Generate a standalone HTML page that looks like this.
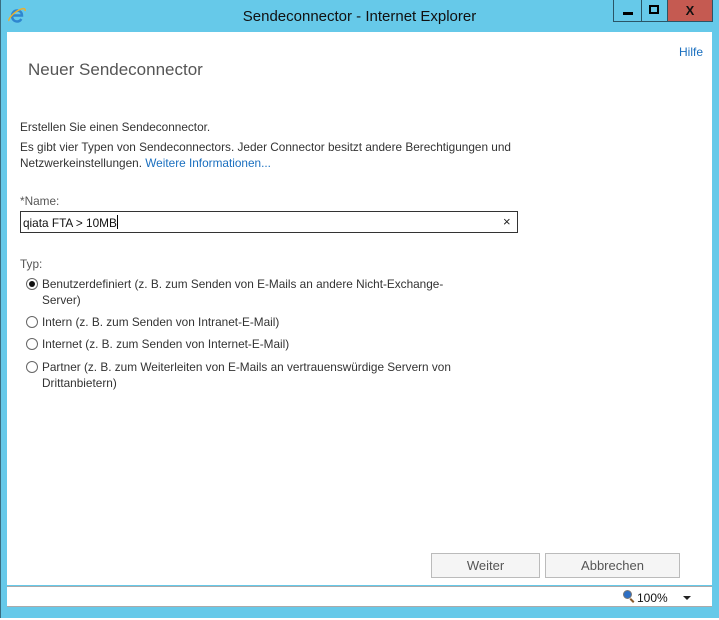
<!DOCTYPE html>
<html><head><meta charset="utf-8"><style>
*{margin:0;padding:0;box-sizing:border-box}
body{width:719px;height:620px;position:relative;background:#fff;font-family:"Liberation Sans",sans-serif;overflow:hidden}
.frame{position:absolute;left:0;top:0;width:719px;height:618px;background:#66c9e9;border-left:1px solid #3a6d80}
.title{position:absolute;top:8px;left:0;width:719px;text-align:center;font-size:15px;color:#111}
.wb{position:absolute;top:0;height:22px;border:1px solid #2a5566;border-top:none}
.content{position:absolute;left:7px;top:32px;width:705px;height:553px;background:#fff}
.status{position:absolute;left:7px;top:586px;width:705px;height:21px;background:#fff;border-top:1px solid #aaa;border-bottom:1px solid #aaa}
.t{position:absolute;font-size:11.8px;color:#333;white-space:nowrap}
.radio{position:absolute;width:12px;height:12px;border:1px solid #666;border-radius:50%;background:#fff}
.btn{position:absolute;top:553px;height:25px;border:1px solid #bbb;background:#f5f5f5;color:#555;font-size:13px;text-align:center;line-height:23px}
</style></head><body>
<div class="frame"></div>
<svg style="position:absolute;left:7px;top:5px" width="20" height="20" viewBox="0 0 20 20">
<path d="M5 10.5h10c0-3-2-5-5-5s-5 2.5-5 5.5 2 5.5 5 5.5c2 0 3.5-1 4.3-2.5" fill="none" stroke="#2e86d0" stroke-width="2.4"/>
<path d="M2 16c-1-2 4-8 10-11 4-2 7-2 6 1" fill="none" stroke="#e8b030" stroke-width="1.5"/>
</svg>
<div class="title">Sendeconnector - Internet Explorer</div>
<div class="wb" style="left:613px;width:29px"><div style="position:absolute;left:9px;top:12px;width:10px;height:3px;background:#000"></div></div>
<div class="wb" style="left:641px;width:27px;border-left:none"><div style="position:absolute;left:8px;top:5px;width:10px;height:9px;border:2px solid #000"></div></div>
<div class="wb" style="left:667px;width:46px;background:#c55a51;border-left:1px solid #2a5566"><div style="text-align:center;font:bold 13px 'Liberation Sans';line-height:22px;color:#111">X</div></div>
<div class="content"></div>
<div class="t" style="left:679px;top:45px;color:#1a6fbf;font-size:12px">Hilfe</div>
<div class="t" style="left:28px;top:60px;font-size:17px;color:#555">Neuer Sendeconnector</div>
<div class="t" style="left:20px;top:120px">Erstellen Sie einen Sendeconnector.</div>
<div class="t" style="left:20px;top:140px">Es gibt vier Typen von Sendeconnectors. Jeder Connector besitzt andere Berechtigungen und</div>
<div class="t" style="left:20px;top:156px">Netzwerkeinstellungen. <span style="color:#1a6fbf">Weitere Informationen...</span></div>
<div class="t" style="left:20px;top:194px;color:#555">*Name:</div>
<div style="position:absolute;left:20px;top:211px;width:498px;height:22px;border:1px solid #333;background:#fff"></div>
<div class="t" style="left:23px;top:215px;color:#111">qiata FTA &gt; 10MB<span style="display:inline-block;width:1px;height:14px;background:#000;vertical-align:-2px"></span></div>
<div class="t" style="left:503px;top:214px;font-size:13px;color:#222">×</div>
<div class="t" style="left:20px;top:257px;color:#555">Typ:</div>
<div class="radio" style="left:26px;top:278px"><div style="position:absolute;left:2px;top:2px;width:6px;height:6px;border-radius:50%;background:#111"></div></div>
<div class="t" style="left:42px;top:277px">Benutzerdefiniert (z. B. zum Senden von E-Mails an andere Nicht-Exchange-</div>
<div class="t" style="left:42px;top:293px">Server)</div>
<div class="radio" style="left:26px;top:316px"></div>
<div class="t" style="left:42px;top:315px">Intern (z. B. zum Senden von Intranet-E-Mail)</div>
<div class="radio" style="left:26px;top:338px"></div>
<div class="t" style="left:42px;top:337px">Internet (z. B. zum Senden von Internet-E-Mail)</div>
<div class="radio" style="left:26px;top:361px"></div>
<div class="t" style="left:42px;top:360px">Partner (z. B. zum Weiterleiten von E-Mails an vertrauenswürdige Servern von</div>
<div class="t" style="left:42px;top:376px">Drittanbietern)</div>
<div class="btn" style="left:431px;width:109px">Weiter</div>
<div class="btn" style="left:545px;width:135px">Abbrechen</div>
<div class="status"></div>
<div style="position:absolute;left:623px;top:590px;width:9px;height:9px;border-radius:50%;border:1px solid #777;background:#2d6fc4"></div>
<div style="position:absolute;left:631px;top:598px;width:2px;height:5px;background:#8a5a2a;transform:rotate(-45deg)"></div>
<div class="t" style="left:637px;top:591px;color:#111;font-size:12px">100%</div>
<div style="position:absolute;left:683px;top:596px;border-left:4px solid transparent;border-right:4px solid transparent;border-top:4px solid #222"></div>
<div style="position:absolute;left:0;top:618px;width:719px;height:2px;background:#fff"></div>
</body></html>
